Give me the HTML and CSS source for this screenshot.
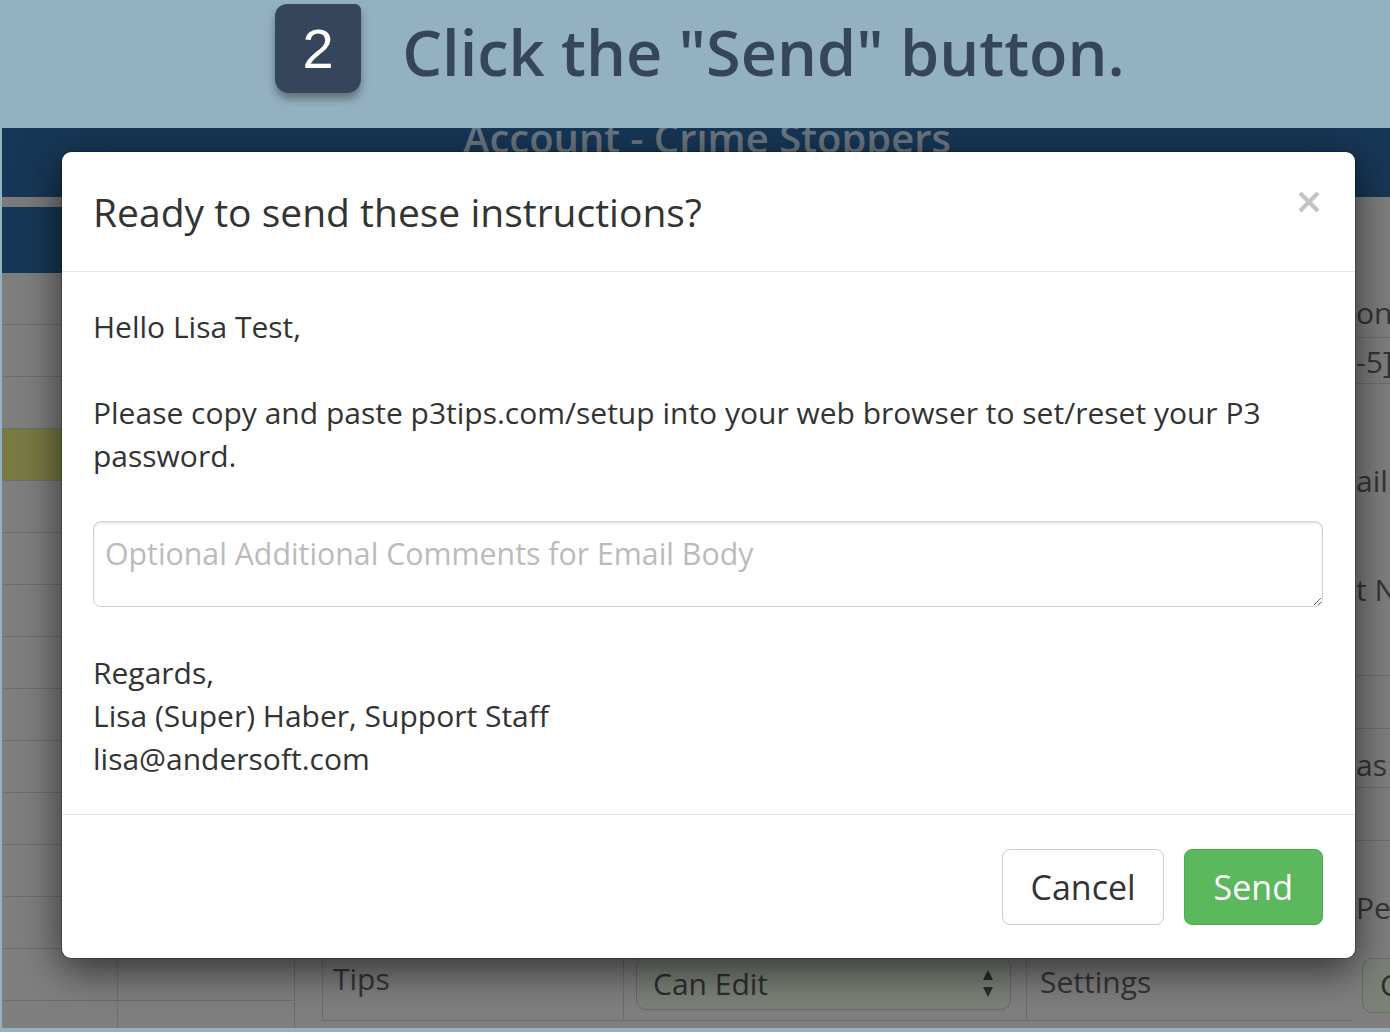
FILE: index.html
```html
<!DOCTYPE html>
<html lang="en">
<head>
<meta charset="utf-8">
<title>Click the "Send" button.</title>
<link rel="stylesheet" href="styles.css">
</head>
<body>
<header class="banner">
  <div class="badge">2</div>
  <h1 class="headline">Click the "Send" button.</h1>
</header>
<div class="app">
  <div class="topnav"><span class="app-title">Account - Crime Stoppers</span></div>
  <div class="main">
    <div class="leftpane">
      <div class="strip"></div>
      <div class="subnav"></div>
      <div class="lrow"></div>
      <div class="lrow"></div>
      <div class="lrow"></div>
      <div class="lrow yellow"></div>
      <div class="lrow"></div>
      <div class="lrow"></div>
      <div class="lrow"></div>
      <div class="lrow"></div>
      <div class="lrow"></div>
      <div class="lrow"></div>
      <div class="lrow"></div>
      <div class="lrow"></div>
      <div class="lrow split"><span class="c1"></span></div>
      <div class="lrow split"><span class="c1"></span></div>
      <div class="lrow split"><span class="c1"></span></div>
    </div>
    <div class="centerpane">
      <div class="perm-row">
        <div class="cell cell-label">Tips</div>
        <div class="cell cell-select">
          <div class="select">
            <span>Can Edit</span>
            <svg class="updown" width="12" height="30" viewBox="0 0 12 30"><path d="M6 1 L11 11 L1 11 Z" fill="#2b2b2b"/><path d="M1 18 L11 18 L6 28 Z" fill="#2b2b2b"/></svg>
          </div>
        </div>
        <div class="cell cell-label cell-settings">Settings</div>
      </div>
    </div>
    <div class="rightpane">
      <div class="rp r1"></div>
      <div class="rp r2 line">one</div>
      <div class="rp r3 line">-5]</div>
      <div class="rp r4">ail</div>
      <div class="rp r5 line">t N</div>
      <div class="rp r6 line"></div>
      <div class="rp r7 line">as</div>
      <div class="rp r8 line"></div>
      <div class="rp r9">Pe</div>
      <div class="rp r10"><div class="rselect">C</div></div>
    </div>
  </div>

  <div class="modal">
    <div class="modal-header">
      <h4 class="modal-title">Ready to send these instructions?</h4>
      <svg class="close" width="22" height="22" viewBox="0 0 22 22"><path d="M2 2 L20 20 M20 2 L2 20" stroke="#c4c4c4" stroke-width="4.2" fill="none"/></svg>
    </div>
    <div class="modal-body">
      <p class="p-hello">Hello Lisa Test,</p>
      <p class="p-msg">Please copy and paste p3tips.com/setup into your web browser to set/reset your P3 password.</p>
      <textarea class="comments" placeholder="Optional Additional Comments for Email Body"></textarea>
      <p class="p-sign">Regards,<br>Lisa (Super) Haber, Support Staff<br>lisa@andersoft.com</p>
    </div>
    <div class="modal-footer">
      <button class="btn btn-default">Cancel</button>
      <button class="btn btn-success">Send</button>
    </div>
  </div>
</div>
</body>
</html>
```
FILE: styles.css
```css
* { box-sizing: border-box; }
html, body { margin: 0; padding: 0; }
body {
  width: 1390px;
  height: 1032px;
  overflow: hidden;
  background: #94b1c1;
  font-family: "Open Sans", "Liberation Sans", sans-serif;
}

/* ---------- instruction banner ---------- */
.banner {
  position: relative;
  z-index: 2;
  height: 128px;
  background: #94b1c1;
  display: flex;
  justify-content: center;
  gap: 41px;
  padding-left: 10px;
}
.badge {
  width: 86px;
  height: 89px;
  margin-top: 4px;
  background: #35465c;
  border-radius: 12px 6px 14px 14px;
  box-shadow: 0 6px 8px rgba(0, 0, 0, 0.35);
  color: #fff;
  font: 56px/1 "Liberation Sans", Arial, sans-serif;
  display: flex;
  align-items: center;
  justify-content: center;
}
.headline {
  margin: 20px 0 0;
  align-self: flex-start;
  font: 600 63px/1 "Open Sans", sans-serif;
  color: #35455b;
  white-space: nowrap;
}

/* ---------- dimmed application behind the modal ---------- */
.app {
  position: relative;
  margin-left: 2px;
  height: 900px;
  background: #7f7f7f;
  overflow: hidden;
  display: flex;
  flex-direction: column;
  color: #353535;
  font-size: 30px;
}
.topnav {
  flex: none;
  height: 69px;
  background: #173756;
  text-align: center;
  padding-left: 22px;
}
.app-title {
  display: block;
  margin-top: -3px;
  font: 600 40px/26px "Open Sans", sans-serif;
  color: #6b7783;
}
.main {
  flex: 1;
  display: flex;
  min-height: 0;
}
.leftpane {
  flex: none;
  width: 293px;
  display: flex;
  flex-direction: column;
  border-right: 1px solid #6c6c6c;
}
.strip { flex: none; height: 10px; background: #7b7b7b; }
.subnav { flex: none; height: 66px; background: #173756; }
.lrow {
  flex: none;
  height: 52px;
  border-bottom: 1px solid #6e6e6e;
  display: flex;
}
.lrow.yellow { background: #7a7a43; }
.lrow.split .c1 { width: 116px; border-right: 1px solid #6e6e6e; }

.centerpane {
  flex: 1;
  display: flex;
  flex-direction: column;
  justify-content: flex-end;
  padding-left: 27px;
  padding-bottom: 7px;
}
.perm-row {
  display: flex;
  height: 65px;
  border-bottom: 1px solid #6c6c6c;
}
.cell { border-left: 1px solid #6c6c6c; }
.cell-label {
  width: 301px;
  padding: 1px 0 0 10px;
  line-height: 43px;
}
.cell-select {
  width: 403px;
  padding: 0 15px 0 12px;
}
.cell-settings { flex: 1; padding-left: 13px; padding-top: 4px; }
.select {
  height: 54px;
  background: #7b8278;
  border: 1px solid #676b66;
  border-radius: 10px;
  display: flex;
  align-items: center;
  justify-content: space-between;
  padding: 0 16px 0 16px;
  color: #2e2e2e;
  line-height: 43px;
}
.updown { margin-top: 2px; }

.rightpane {
  flex: none;
  width: 39px;
  overflow: hidden;
  display: flex;
  flex-direction: column;
  white-space: nowrap;
  line-height: 30px;
}
.rp { flex: none; padding-left: 5px; }
.rp.line { border-bottom: 1px solid #6e6e6e; }
.r1 { height: 100px; }
.r2 { height: 41px; padding-top: 1px; }
.r3 { height: 46px; padding-top: 9px; }
.r4 { height: 185px; padding-top: 82px; }
.r5 { height: 107px; padding-top: 6px; }
.r6 { height: 53px; }
.r7 { height: 59px; padding-top: 21px; }
.r8 { height: 53px; }
.r9 { height: 117px; padding-top: 52px; }
.r10 { flex: 1; }
.rselect {
  margin-left: 6px;
  width: 60px;
  height: 55px;
  background: #7b8278;
  border: 1px solid #676b66;
  border-radius: 10px;
  padding-left: 17px;
  line-height: 52px;
  color: #2e2e2e;
}

/* ---------- modal ---------- */
.modal {
  position: absolute;
  left: 59px;
  top: 23px;
  width: 1295px;
  background: #fff;
  background-clip: padding-box;
  border: 1px solid rgba(0, 0, 0, 0.2);
  border-radius: 10px;
  box-shadow: 0 11px 42px rgba(0, 0, 0, 0.62);
  color: #333;
  font-family: "Open Sans", sans-serif;
}
.modal-header {
  padding: 32px 33px 32px 31px;
  border-bottom: 1px solid #e5e5e5;
  display: flex;
  justify-content: space-between;
  align-items: flex-start;
}
.modal-title {
  margin: 0;
  font-size: 39px;
  font-weight: 400;
  line-height: 55px;
}
.close { margin-top: 7px; margin-right: 2px; }
.modal-body {
  padding: 33px 32px 34px 31px;
  font-size: 30px;
  line-height: 43px;
}
.modal-body p { margin: 0; }
.p-hello { margin-bottom: 43px !important; }
.p-msg { margin-bottom: 44px !important; }
.comments {
  display: block;
  width: 100%;
  height: 86px;
  margin: 0 0 44px;
  padding: 10px 11px;
  border: 1px solid #cfcfcf;
  border-radius: 8px;
  box-shadow: inset 0 2px 2px rgba(0, 0, 0, 0.075);
  font: 30.3px/43px "Open Sans", sans-serif;
  color: #555;
  resize: vertical;
}
.comments::placeholder { color: #bbbbbb; }
.modal-footer {
  border-top: 1px solid #e5e5e5;
  padding: 34px 32px 33px;
  display: flex;
  justify-content: flex-end;
  gap: 20px;
}
.btn {
  height: 76px;
  padding: 0 27px;
  font: 34px/1 "Open Sans", sans-serif;
  border-radius: 8px;
  border: 1px solid transparent;
}
.btn-default { background: #fff; border-color: #ccc; color: #333; }
.btn-success { background: #5cb85c; border-color: #4cae4c; color: #fff; padding: 0 29px; }
```
